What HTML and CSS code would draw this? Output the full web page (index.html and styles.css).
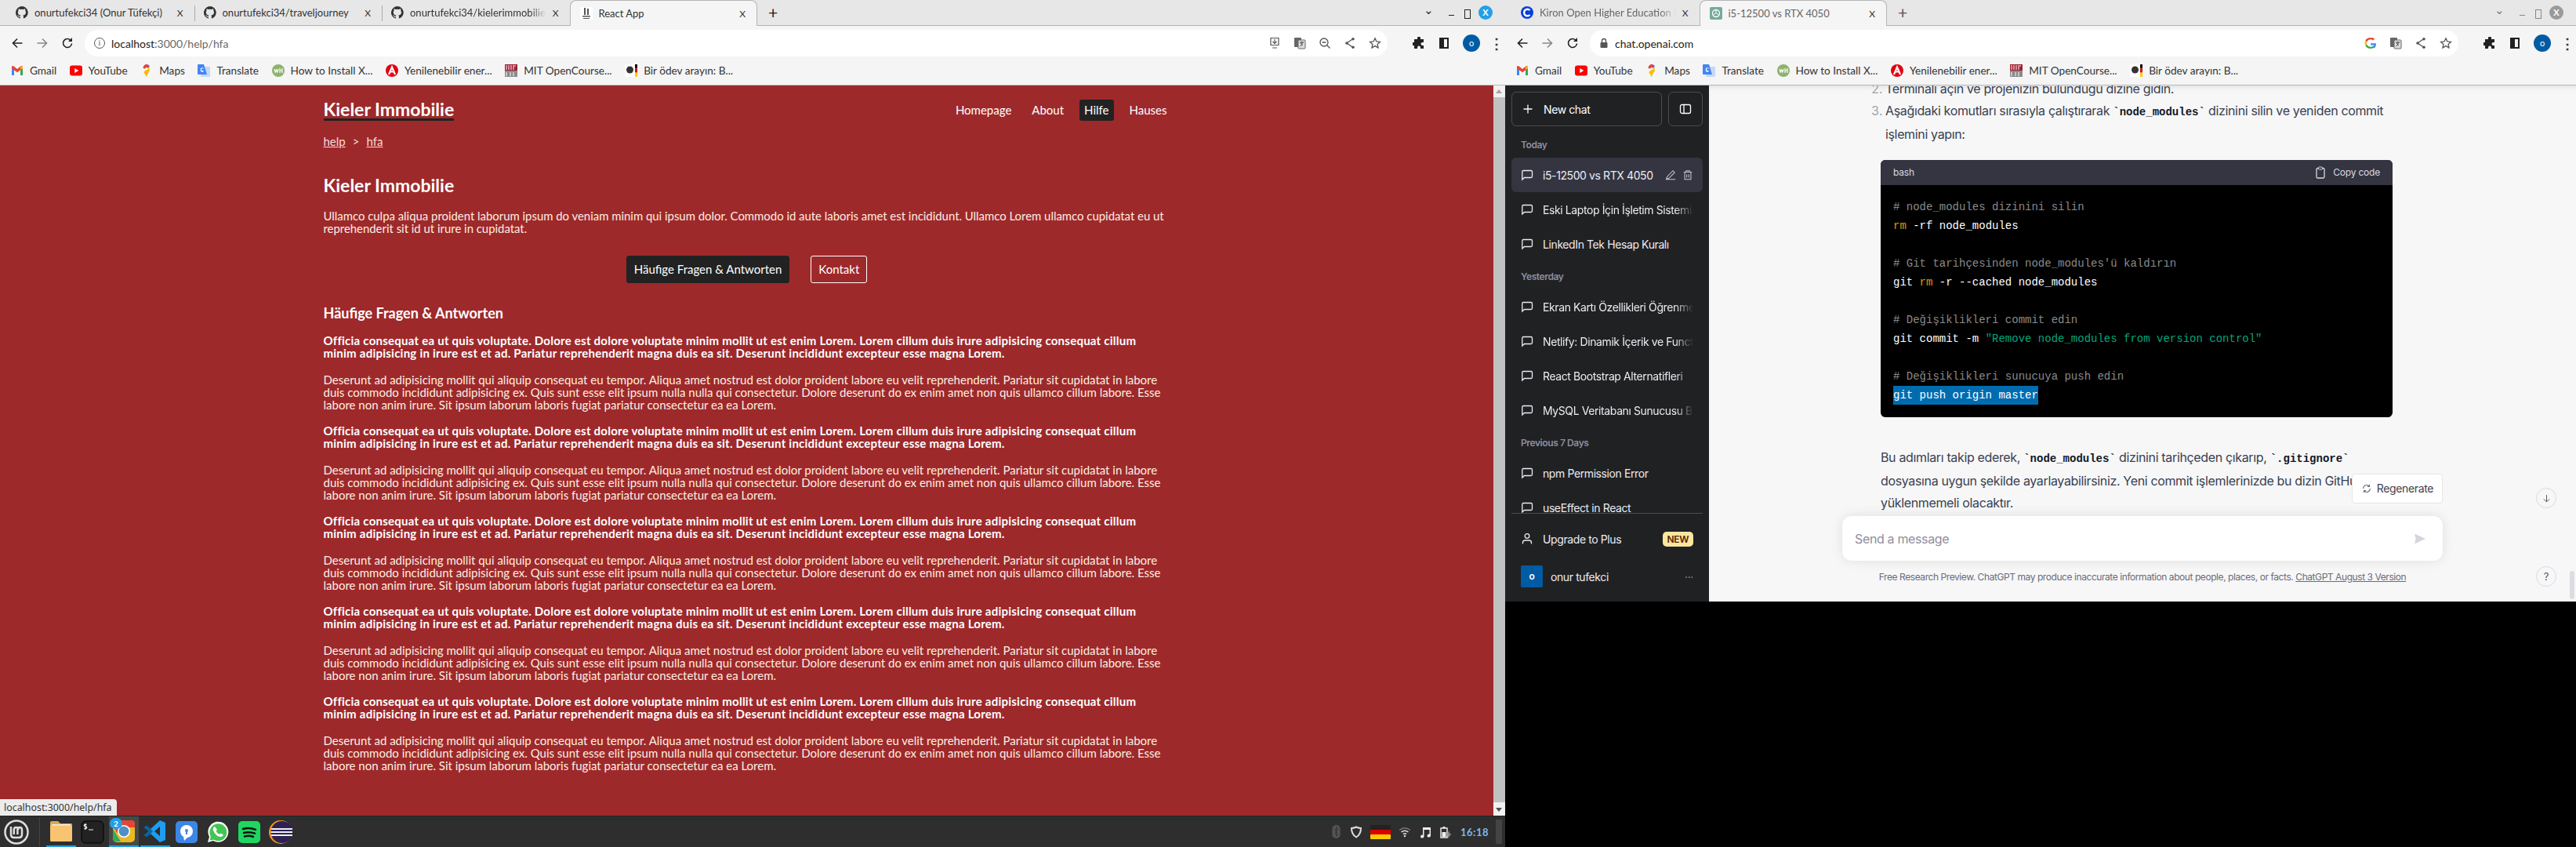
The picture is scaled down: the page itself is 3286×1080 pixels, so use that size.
FILE: index.html
```html
<!DOCTYPE html>
<html lang="de">
<head>
  <meta charset="UTF-8">
  <title>React App</title>
  <link rel="stylesheet" href="styles.css">
</head>
<body>

  <svg class="defs" width="0" height="0">
    <symbol id="i-github" viewBox="0 0 16 16"><path fill="#333" d="M8 0a8 8 0 0 0-2.5 15.6c.4.1.5-.2.5-.4v-1.4c-2.2.5-2.7-1-2.7-1-.4-.9-.9-1.200-.9-1.200-.7-.5.1-.5.1-.5.8.1 1.200.8 1.200.8.7 1.200 1.900.9 2.300.7.1-.5.3-.9.5-1.100-1.800-.2-3.700-.9-3.700-4 0-.9.3-1.600.8-2.100-.1-.2-.4-1 .1-2.100 0 0 .7-.2 2.200.8a7.600 7.600 0 0 1 4 0c1.500-1 2.200-.8 2.200-.8.4 1.100.2 1.900.1 2.100.5.6.8 1.300.8 2.100 0 3.100-1.900 3.700-3.700 3.900.3.3.6.8.6 1.500v2.200c0 .2.1.5.6.4A8 8 0 0 0 8 0z"/></symbol>
    <symbol id="i-back" viewBox="0 0 16 16"><path fill="none" stroke="currentColor" stroke-width="1.600" d="M14.500 8H2.500M8 2.500 2.500 8 8 13.500"/></symbol>
    <symbol id="i-reload" viewBox="0 0 16 16"><path fill="none" stroke="currentColor" stroke-width="1.600" d="M13.500 8.500a5.500 5.500 0 1 1-1.500-4.300"/><path fill="currentColor" d="M14 1v5H9z"/></symbol>
    <symbol id="i-star" viewBox="0 0 16 16"><path fill="none" stroke="#555" stroke-width="1.300" d="m8 1.800 1.900 4.100 4.500.5-3.300 3 .9 4.500L8 11.600l-4 2.300.9-4.500-3.300-3 4.500-.5z"/></symbol>
    <symbol id="i-share" viewBox="0 0 16 16"><path fill="none" stroke="#555" stroke-width="1.300" d="M12 2.500 4 8l8 5.500"/><circle cx="12" cy="2.800" r="1.800" fill="#555"/><circle cx="4" cy="8" r="1.800" fill="#555"/><circle cx="12" cy="13.200" r="1.800" fill="#555"/></symbol>
    <symbol id="i-translate" viewBox="0 0 16 16"><rect x="1" y="1" width="9" height="12" rx="1" fill="#666"/><rect x="6" y="4" width="9" height="11" rx="1" fill="#ddd" stroke="#666"/><path stroke="#444" fill="none" d="M8 7h5M10.500 6v1M9 12l3-5M9 8l3 3"/></symbol>
    <symbol id="i-puzzle" viewBox="0 0 16 16"><path fill="#222" d="M6 1.500a2 2 0 0 1 4 0V3h4v4h-1.500a2 2 0 0 0 0 4H14v4h-4v-1.500a2 2 0 0 0-4 0V15H2v-4H.5a2 2 0 0 1 0-4H2V3h4z"/></symbol>
    <symbol id="i-panel" viewBox="0 0 16 16"><path fill="#222" fill-rule="evenodd" d="M2 1h12v14H2zM8 3v10h4V3z"/></symbol>
    <symbol id="i-gmail" viewBox="0 0 16 16"><path fill="#4285f4" d="M1 4v10h3V7z"/><path fill="#34a853" d="M12 7v7h3V4z"/><path fill="#ea4335" d="M1 2.500v2.800l7 5 7-5V2.500l-2-.5-5 4-5-4z"/><path fill="#fbbc04" d="M12 3.500 15 2v3l-3 2z"/></symbol>
    <symbol id="i-youtube" viewBox="0 0 16 16"><rect y="1.500" width="16" height="13" rx="3" fill="#f00"/><path fill="#fff" d="m6.300 5 5 3-5 3z"/></symbol>
    <symbol id="i-maps" viewBox="0 0 16 16"><path fill="#34a853" d="M8 16c-1-3-2.500-4.500-3.500-6L8 8z"/><path fill="#fbbc04" d="M4.500 10 11 3.500 12 8c-1 2-3 4-4 8z"/><path fill="#4285f4" d="M8 0c2 0 3.500 1 4 3L8 6z"/><path fill="#ea4335" d="M8 0C5.500 0 3.500 2 3.500 5l4.500 1 3-3C10 1 9 0 8 0z"/><circle cx="8" cy="5.500" r="1.600" fill="#fff"/></symbol>
    <symbol id="i-gtranslate" viewBox="0 0 16 16"><rect x="4" y="3" width="12" height="13" rx="1" fill="#c6d8f7"/><path fill="#4285f4" d="M0 1q0-1 1-1h7l4 13H1q-1 0-1-1z"/><path fill="none" stroke="#fff" d="M7.500 5h-3v3.500h3C7.500 10 3 10 4.500 6"/></symbol>
    <symbol id="i-wh" viewBox="0 0 16 16"><circle cx="8" cy="8" r="8" fill="#8db26c"/><path fill="none" stroke="#fff" stroke-width="1.200" d="M3 6l1.200 4 1.300-3 1.300 3L8 6M10 5v6M13 5v6M10 8h3"/></symbol>
    <symbol id="i-arbeit" viewBox="0 0 16 16"><circle cx="8" cy="8" r="8" fill="#e3000f"/><path fill="none" stroke="#fff" stroke-width="2.200" d="M4 13 8 3.500 12 13M5.500 9.500h5"/></symbol>
    <symbol id="i-mit" viewBox="0 0 16 16"><rect width="16" height="8" fill="#a31f34"/><rect y="8" width="16" height="8" fill="#8a8b8c"/><path stroke="#fff" d="M2 1v6M5 1v6M8 1v6M11 1v6M13 1v2M2 10v5M7 10v5M11 10v5"/></symbol>
    <symbol id="i-eagle" viewBox="0 0 16 16"><rect width="16" height="16" fill="#fff"/><circle cx="6.500" cy="7" r="4.500" fill="#333"/><rect x="13" y="0" width="3" height="5.300" fill="#111"/><rect x="13" y="5.300" width="3" height="5.300" fill="#d00"/><rect x="13" y="10.600" width="3" height="5.400" fill="#fc0"/></symbol>
    <symbol id="i-chat" viewBox="0 0 16 16"><path fill="none" stroke="#ececf1" stroke-width="1.300" d="M3 2.500h10a1.500 1.500 0 0 1 1.500 1.500v6a1.500 1.500 0 0 1-1.500 1.500H4.500L1.800 14V4A1.500 1.500 0 0 1 3 2.500z"/></symbol>
  </svg>

  <div class="left-col">
    <div class="window">
      <div class="tabbar">
        <div class="tab"><svg class="fav"><use href="#i-github"/></svg><span class="tab-title">onurtufekci34 (Onur Tüfekçi)</span><span class="tab-x">X</span></div>
        <div class="tab"><svg class="fav"><use href="#i-github"/></svg><span class="tab-title">onurtufekci34/traveljourney</span><span class="tab-x">X</span></div>
        <div class="tab"><svg class="fav"><use href="#i-github"/></svg><span class="tab-title fade">onurtufekci34/kielerimmobilie</span><span class="tab-x">X</span></div>
        <div class="tab active"><svg class="fav" viewBox="0 0 16 16"><rect width="16" height="16" fill="#fff"/><path fill="#555" d="M5 1h2v9H5zM9 2h2v8H9zM3 11h10v1.500H3zM4 14h8v1H4z"/></svg><span class="tab-title">React App</span><span class="tab-x">X</span></div>
        <span class="new-tab">+</span>
        <div class="win-controls">
          <span class="chev">⌄</span><span class="win-min"></span><span class="win-max"></span><span class="win-close blue">X</span>
        </div>
      </div>
      <div class="toolbar">
        <svg class="nav-ic"><use href="#i-back"/></svg>
        <svg class="nav-ic fwd"><use href="#i-back"/></svg>
        <svg class="nav-ic"><use href="#i-reload"/></svg>
        <div class="omnibox">
          <span class="info">i</span>
          <span class="url"><b>localhost</b>:3000/help/hfa</span>
          <div class="omni-right">
            <svg class="omni-ic" viewBox="0 0 16 16"><path fill="none" stroke="#555" stroke-width="1.200" d="M3 1.500h10v9H3zM5 14h6M8 3v5M5.500 6 8 8.500 10.500 6"/></svg>
            <svg class="omni-ic"><use href="#i-translate"/></svg>
            <svg class="omni-ic" viewBox="0 0 16 16"><circle cx="7" cy="7" r="5" fill="none" stroke="#555" stroke-width="1.300"/><path stroke="#555" stroke-width="1.300" d="M4.500 7h5M10.500 10.500l4 4"/></svg>
            <svg class="omni-ic"><use href="#i-share"/></svg>
            <svg class="omni-ic"><use href="#i-star"/></svg>
          </div>
        </div>
        <div class="tool-right">
          <svg class="tool-ic"><use href="#i-puzzle"/></svg>
          <svg class="tool-ic"><use href="#i-panel"/></svg>
          <span class="avatar">o</span>
          <span class="dots">⋮</span>
        </div>
      </div>
      <div class="bookmarks">
        <span class="bm"><svg><use href="#i-gmail"/></svg>Gmail</span>
        <span class="bm"><svg><use href="#i-youtube"/></svg>YouTube</span>
        <span class="bm"><svg><use href="#i-maps"/></svg>Maps</span>
        <span class="bm"><svg><use href="#i-gtranslate"/></svg>Translate</span>
        <span class="bm"><svg><use href="#i-wh"/></svg>How to Install X...</span>
        <span class="bm"><svg><use href="#i-arbeit"/></svg>Yenilenebilir ener...</span>
        <span class="bm"><svg><use href="#i-mit"/></svg>MIT OpenCourse...</span>
        <span class="bm"><svg><use href="#i-eagle"/></svg>Bir ödev arayın: B...</span>
      </div>

      <div class="viewport">
        <main class="site">
          <div class="container">
            <header class="site-head">
              <a class="brand">Kieler Immobilie</a>
              <nav class="site-nav">
                <a>Homepage</a>
                <a>About</a>
                <a class="current">Hilfe</a>
                <a>Hauses</a>
              </nav>
            </header>
            <div class="crumbs"><a>help</a><span>&gt;</span><a>hfa</a></div>

            <h2>Kieler Immobilie</h2>
            <p class="intro">Ullamco culpa aliqua proident laborum ipsum do veniam minim qui ipsum dolor. Commodo id aute laboris amet est incididunt. Ullamco Lorem ullamco cupidatat eu ut<br>reprehenderit sit id ut irure in cupidatat.</p>
            <div class="actions">
              <a class="btn btn-dark">Häufige Fragen &amp; Antworten</a>
              <a class="btn btn-line">Kontakt</a>
            </div>

            <h3>Häufige Fragen &amp; Antworten</h3>
            <div class="faq">
              <p class="q">Officia consequat ea ut quis voluptate. Dolore est dolore voluptate minim mollit ut est enim Lorem. Lorem cillum duis irure adipisicing consequat cillum<br>minim adipisicing in irure est et ad. Pariatur reprehenderit magna duis ea sit. Deserunt incididunt excepteur esse magna Lorem.</p>
              <p class="a">Deserunt ad adipisicing mollit qui aliquip consequat eu tempor. Aliqua amet nostrud est dolor proident labore eu velit reprehenderit. Pariatur sit cupidatat in labore<br>duis commodo incididunt adipisicing ex. Quis sunt esse elit ipsum nulla nulla qui consectetur. Dolore deserunt do ex enim amet non quis ullamco cillum labore. Esse<br>labore non anim irure. Sit ipsum laborum laboris fugiat pariatur consectetur ea ea Lorem.</p>
              <p class="q">Officia consequat ea ut quis voluptate. Dolore est dolore voluptate minim mollit ut est enim Lorem. Lorem cillum duis irure adipisicing consequat cillum<br>minim adipisicing in irure est et ad. Pariatur reprehenderit magna duis ea sit. Deserunt incididunt excepteur esse magna Lorem.</p>
              <p class="a">Deserunt ad adipisicing mollit qui aliquip consequat eu tempor. Aliqua amet nostrud est dolor proident labore eu velit reprehenderit. Pariatur sit cupidatat in labore<br>duis commodo incididunt adipisicing ex. Quis sunt esse elit ipsum nulla nulla qui consectetur. Dolore deserunt do ex enim amet non quis ullamco cillum labore. Esse<br>labore non anim irure. Sit ipsum laborum laboris fugiat pariatur consectetur ea ea Lorem.</p>
              <p class="q">Officia consequat ea ut quis voluptate. Dolore est dolore voluptate minim mollit ut est enim Lorem. Lorem cillum duis irure adipisicing consequat cillum<br>minim adipisicing in irure est et ad. Pariatur reprehenderit magna duis ea sit. Deserunt incididunt excepteur esse magna Lorem.</p>
              <p class="a">Deserunt ad adipisicing mollit qui aliquip consequat eu tempor. Aliqua amet nostrud est dolor proident labore eu velit reprehenderit. Pariatur sit cupidatat in labore<br>duis commodo incididunt adipisicing ex. Quis sunt esse elit ipsum nulla nulla qui consectetur. Dolore deserunt do ex enim amet non quis ullamco cillum labore. Esse<br>labore non anim irure. Sit ipsum laborum laboris fugiat pariatur consectetur ea ea Lorem.</p>
              <p class="q">Officia consequat ea ut quis voluptate. Dolore est dolore voluptate minim mollit ut est enim Lorem. Lorem cillum duis irure adipisicing consequat cillum<br>minim adipisicing in irure est et ad. Pariatur reprehenderit magna duis ea sit. Deserunt incididunt excepteur esse magna Lorem.</p>
              <p class="a">Deserunt ad adipisicing mollit qui aliquip consequat eu tempor. Aliqua amet nostrud est dolor proident labore eu velit reprehenderit. Pariatur sit cupidatat in labore<br>duis commodo incididunt adipisicing ex. Quis sunt esse elit ipsum nulla nulla qui consectetur. Dolore deserunt do ex enim amet non quis ullamco cillum labore. Esse<br>labore non anim irure. Sit ipsum laborum laboris fugiat pariatur consectetur ea ea Lorem.</p>
              <p class="q">Officia consequat ea ut quis voluptate. Dolore est dolore voluptate minim mollit ut est enim Lorem. Lorem cillum duis irure adipisicing consequat cillum<br>minim adipisicing in irure est et ad. Pariatur reprehenderit magna duis ea sit. Deserunt incididunt excepteur esse magna Lorem.</p>
              <p class="a">Deserunt ad adipisicing mollit qui aliquip consequat eu tempor. Aliqua amet nostrud est dolor proident labore eu velit reprehenderit. Pariatur sit cupidatat in labore<br>duis commodo incididunt adipisicing ex. Quis sunt esse elit ipsum nulla nulla qui consectetur. Dolore deserunt do ex enim amet non quis ullamco cillum labore. Esse<br>labore non anim irure. Sit ipsum laborum laboris fugiat pariatur consectetur ea ea Lorem.</p>
            </div>
          </div>
          <div class="status-bubble">localhost:3000/help/hfa</div>
        </main>
        <div class="scrollbar">
          <span class="arrow-up"></span>
          <span class="thumb"></span>
          <span class="arrow-down"></span>
        </div>
      </div>
    </div>

    <footer class="taskbar">
      <svg class="mint" viewBox="0 0 32 32"><circle cx="16" cy="16" r="14.500" fill="none" stroke="#ddd" stroke-width="2.500"/><path fill="none" stroke="#ddd" stroke-width="2.500" d="M9 9v10q0 4 4 4h6q4 0 4-4v-6q0-3-2.800-3t-2.800 3v6M18.400 13q0-3-2.800-3t-2.800 3v6"/></svg>
      <span class="task-sep"></span>
      <div class="task-apps">
        <span class="app running"><svg viewBox="0 0 30 30"><path fill="#dca94f" d="M1 4q0-2 2-2h8l3 3h14q1 0 1 2v3H1z"/><rect x="1" y="7" width="28" height="21" rx="1.500" fill="#f8c471"/><rect x="3" y="6" width="24" height="1.500" fill="#eee"/></svg></span>
        <span class="app"><svg viewBox="0 0 30 30"><rect x="1" y="1" width="28" height="28" rx="5" fill="#222" stroke="#000"/><path fill="none" stroke="#eee" stroke-width="1.200" d="M7.500 5.500q-2-1-3 .3t1.500 2 1.500 2-3 .3M6 4v8M10 12h6"/></svg></span>
        <span class="app running focused"><svg viewBox="0 0 30 30"><rect x="1" y="1" width="28" height="28" rx="5" fill="#e8b923"/><path fill="#ea4335" d="M1 6q0-5 5-5h18q5 0 5 5v4H15L6 17z"/><path fill="#34a853" d="M1 12l10 16H6q-5 0-5-5z"/><circle cx="15" cy="15" r="8" fill="#fff"/><circle cx="15" cy="15" r="6.500" fill="#4f8fc6"/></svg><b class="badge">2</b></span>
        <span class="app running"><svg viewBox="0 0 30 30"><path fill="#1f9cf0" d="M21 1 28 4v22l-7 3-12-11-5 4-3-2 6-5-6-5 3-2 5 4zM21 9l-7 6 7 6z"/><path fill="#0065a9" d="M1 10l3-2 5 4 3 3-3 3-5 4-3-2 6-5z"/></svg></span>
        <span class="app"><svg viewBox="0 0 30 30"><rect x="1" y="1" width="28" height="28" rx="5" fill="#3d86e6"/><circle cx="15" cy="14" r="8" fill="#fff"/><circle cx="15" cy="13" r="2" fill="#3d86e6"/><rect x="14" y="13" width="2" height="5" fill="#3d86e6"/><path fill="#fff" d="M11 20l1 6 5-5z"/></svg></span>
        <span class="app"><svg viewBox="0 0 30 30"><path fill="#fff" d="M2 28l2-7a13 13 0 1 1 5 5z"/><path fill="#43c553" d="M4.500 25.500l1.300-4.700a11 11 0 1 1 4 4z"/><path fill="#fff" d="M11 8q-3 1-2 5 3 7 9 8 3 0 4-2.500l-3.500-2-1.500 1.500q-3-1-4.500-4.500l1.500-1.500z"/></svg></span>
        <span class="app"><svg viewBox="0 0 30 30"><rect x="1" y="1" width="28" height="28" rx="5" fill="#1ed760"/><path fill="none" stroke="#111" stroke-width="2.500" stroke-linecap="round" d="M7 11q8-2.500 16 .8M8 16q7-2 14 .6M9 20.500q6-1.600 11 .5"/></svg></span>
        <span class="app"><svg viewBox="0 0 30 30"><circle cx="15" cy="15" r="15" fill="#f7941e"/><circle cx="16.500" cy="15" r="14" fill="#2c2255"/><path stroke="#eee" stroke-width="1.800" d="M3 11h27M2.500 15h28M3 19h27"/></svg></span>
      </div>
      <div class="tray">
        <svg class="tray-bt" viewBox="0 0 12 20"><rect width="12" height="20" rx="6" fill="#555"/><path fill="none" stroke="#2e2e2e" d="M3 6l6 8-3 3V3l3 3-6 8"/></svg>
        <svg class="tray-ic" viewBox="0 0 16 16"><path fill="none" stroke="#ddd" stroke-width="2" d="M8 1.500q3 1.500 6 1.500 0 8-6 11.500Q2 11 2 3q3 0 6-1.500z"/></svg>
        <svg class="tray-flag" viewBox="0 0 26 18"><rect width="26" height="6" rx="1" fill="#222"/><rect y="6" width="26" height="6" fill="#d00"/><rect y="12" width="26" height="6" rx="1" fill="#fc0"/></svg>
        <svg class="tray-ic" viewBox="0 0 16 16"><path fill="none" stroke="#777" stroke-width="1.500" d="M1 5.500q7-5.500 14 0"/><path fill="none" stroke="#ddd" stroke-width="1.500" d="M3.500 8q4.500-3.500 9 0M5.800 10.500q2.200-1.700 4.400 0"/><circle cx="8" cy="13" r="1.300" fill="#ddd"/></svg>
        <svg class="tray-ic" viewBox="0 0 16 16"><path fill="#eee" d="M5 2h10v10.500a2.200 2 0 1 1-1.500-1.800V5H6.500v8.500A2.200 2 0 1 1 5 11.700z"/></svg>
        <svg class="tray-ic" viewBox="0 0 16 16"><path fill="none" stroke="#eee" stroke-width="1.400" d="M2 3h8v12H2z"/><rect x="4.500" y="1" width="3" height="2" fill="#eee"/><rect x="3.500" y="8" width="5" height="6" fill="#eee"/><path fill="#888" d="M13 6v4h2.500L11 16v-4H9z"/></svg>
        <span class="clock">16:18</span>
      </div>
      <span class="task-handle"></span>
    </footer>
  </div>

  <div class="window right-win">
    <div class="tabbar">
      <div class="tab"><svg class="fav" viewBox="0 0 16 16"><circle cx="8" cy="8" r="8" fill="#0a3fd8"/><path fill="none" stroke="#fff" stroke-width="2.400" d="M11.500 5a4.300 4.300 0 1 0 0 6"/></svg><span class="tab-title fade dim">Kiron Open Higher Education I</span><span class="tab-x">X</span></div>
      <div class="tab active"><svg class="fav" viewBox="0 0 16 16"><rect width="16" height="16" rx="2" fill="#74aa9c"/><circle cx="8" cy="8" r="4.500" fill="none" stroke="#fff" stroke-width="1.300"/><path stroke="#fff" d="M8 3.500v4M4 10.500l4-3M12 10.500l-4-3"/></svg><span class="tab-title dim">i5-12500 vs RTX 4050</span><span class="tab-x">X</span></div>
      <span class="new-tab">+</span>
      <div class="win-controls">
        <span class="chev muted">⌄</span><span class="win-min muted"></span><span class="win-max muted"></span><span class="win-close grey">X</span>
      </div>
    </div>
    <div class="toolbar">
      <svg class="nav-ic"><use href="#i-back"/></svg>
      <svg class="nav-ic fwd"><use href="#i-back"/></svg>
      <svg class="nav-ic"><use href="#i-reload"/></svg>
      <div class="omnibox">
        <svg class="lock" viewBox="0 0 12 14"><rect x="1.500" y="6" width="9" height="7" rx="1" fill="#555"/><path fill="none" stroke="#555" stroke-width="1.400" d="M3.500 6V4a2.500 2.500 0 0 1 5 0v2"/></svg>
        <span class="url dark">chat.openai.com</span>
        <div class="omni-right">
          <svg class="omni-ic" viewBox="0 0 16 16"><path fill="#4285f4" d="M15 8.200H8v2.400h4.200q-.3 1.500-1.500 2.300l2.200 1.700Q15 12.700 15 8.200z"/><path fill="#34a853" d="M3.300 9.700 1.300 11.300Q3.200 15 8 15q3 0 4.900-1.400l-2.200-1.700q-1.100.8-2.700.8-3.200 0-4.700-3z"/><path fill="#fbbc04" d="M3.300 6.300 1.300 4.700q-1.500 3.300 0 6.600l2-1.600q-.6-1.700 0-3.400z"/><path fill="#ea4335" d="M8 3.200q1.900 0 3.100 1.200l2-2Q11 1 8 1 3.200 1 1.300 4.700l2 1.600Q4.800 3.200 8 3.200z"/></svg>
          <svg class="omni-ic"><use href="#i-translate"/></svg>
          <svg class="omni-ic"><use href="#i-share"/></svg>
          <svg class="omni-ic"><use href="#i-star"/></svg>
        </div>
      </div>
      <div class="tool-right">
        <svg class="tool-ic"><use href="#i-puzzle"/></svg>
        <svg class="tool-ic"><use href="#i-panel"/></svg>
        <span class="avatar">o</span>
        <span class="dots">⋮</span>
      </div>
    </div>
    <div class="bookmarks">
      <span class="bm"><svg><use href="#i-gmail"/></svg>Gmail</span>
      <span class="bm"><svg><use href="#i-youtube"/></svg>YouTube</span>
      <span class="bm"><svg><use href="#i-maps"/></svg>Maps</span>
      <span class="bm"><svg><use href="#i-gtranslate"/></svg>Translate</span>
      <span class="bm"><svg><use href="#i-wh"/></svg>How to Install X...</span>
      <span class="bm"><svg><use href="#i-arbeit"/></svg>Yenilenebilir ener...</span>
      <span class="bm"><svg><use href="#i-mit"/></svg>MIT OpenCourse...</span>
      <span class="bm"><svg><use href="#i-eagle"/></svg>Bir ödev arayın: B...</span>
    </div>

    <div class="gpt">
      <aside class="sidebar">
        <div class="side-top">
          <div class="new-chat"><svg viewBox="0 0 16 16"><path stroke="#fff" stroke-width="1.300" d="M8 2.500v11M2.500 8h11"/></svg>New chat</div>
          <div class="side-toggle"><svg viewBox="0 0 16 16"><rect x="1.500" y="2.500" width="13" height="11" rx="2" fill="none" stroke="#fff" stroke-width="1.300"/><path stroke="#fff" stroke-width="1.300" d="M6 2.500v11"/></svg></div>
        </div>
        <div class="history">
          <div class="side-label first">Today</div>
          <div class="row selected"><svg><use href="#i-chat"/></svg><span class="row-title">i5-12500 vs RTX 4050</span>
            <svg class="row-act" viewBox="0 0 16 16"><path fill="none" stroke="#c5c5d2" stroke-width="1.200" d="M2 14l1-3.500L11.500 2 14 4.500 5.500 13zM1 14.500h14"/></svg>
            <svg class="row-act" viewBox="0 0 16 16"><path fill="none" stroke="#c5c5d2" stroke-width="1.200" d="M2 4h12M5.500 4V2h5v2M3.500 4v10.500h9V4M6.500 7v5M9.500 7v5"/></svg>
          </div>
          <div class="row"><svg><use href="#i-chat"/></svg><span class="row-title fade">Eski Laptop İçin İşletim Sistemi</span></div>
          <div class="row"><svg><use href="#i-chat"/></svg><span class="row-title">LinkedIn Tek Hesap Kuralı</span></div>
          <div class="side-label">Yesterday</div>
          <div class="row"><svg><use href="#i-chat"/></svg><span class="row-title fade">Ekran Kartı Özellikleri Öğrenme</span></div>
          <div class="row"><svg><use href="#i-chat"/></svg><span class="row-title fade">Netlify: Dinamik İçerik ve Functions</span></div>
          <div class="row"><svg><use href="#i-chat"/></svg><span class="row-title fade">React Bootstrap Alternatifleri</span></div>
          <div class="row"><svg><use href="#i-chat"/></svg><span class="row-title fade">MySQL Veritabanı Sunucusu Bağlantı</span></div>
          <div class="side-label">Previous 7 Days</div>
          <div class="row"><svg><use href="#i-chat"/></svg><span class="row-title">npm Permission Error</span></div>
          <div class="row"><svg><use href="#i-chat"/></svg><span class="row-title">useEffect in React</span></div>
        </div>
        <div class="side-foot">
          <div class="foot-row"><svg viewBox="0 0 16 16"><circle cx="8" cy="4.500" r="2.800" fill="none" stroke="#ececf1" stroke-width="1.300"/><path fill="none" stroke="#ececf1" stroke-width="1.300" d="M2.500 14.500v-1.500q0-3 3-3h5q3 0 3 3v1.500"/></svg>Upgrade to Plus<span class="new-badge">NEW</span></div>
          <div class="foot-row user"><span class="user-pic">o</span>onur tufekci<span class="more">···</span></div>
        </div>
      </aside>

      <section class="chat">
        <div class="answer">
          <ol start="2" class="steps">
            <li>Terminali açın ve projenizin bulunduğu dizine gidin.</li>
            <li>Aşağıdaki komutları sırasıyla çalıştırarak <code>`node_modules`</code> dizinini silin ve yeniden commit işlemini yapın:</li>
          </ol>
          <div class="code-box">
            <div class="code-head"><span>bash</span><span class="copy"><svg viewBox="0 0 16 16"><rect x="3" y="2.500" width="10" height="12.500" rx="1.500" fill="none" stroke="#d9d9e3" stroke-width="1.300"/><rect x="5.500" y="1" width="5" height="3" rx=".8" fill="#343541" stroke="#d9d9e3"/></svg>Copy code</span></div>
<pre class="code"><span class="cmt"># node_modules dizinini silin</span>
<span class="kw">rm</span> -rf node_modules

<span class="cmt"># Git tarihçesinden node_modules'ü kaldırın</span>
git <span class="kw">rm</span> -r --cached node_modules

<span class="cmt"># Değişiklikleri commit edin</span>
git commit -m <span class="str">"Remove node_modules from version control"</span>

<span class="cmt"># Değişiklikleri sunucuya push edin</span>
<span class="sel">git push origin master</span></pre>
          </div>
          <p class="outro">Bu adımları takip ederek, <code>`node_modules`</code> dizinini tarihçeden çıkarıp, <code>`.gitignore`</code><br>dosyasına uygun şekilde ayarlayabilirsiniz. Yeni commit işlemlerinizde bu dizin GitHub'a<br>yüklenmemeli olacaktır.</p>
        </div>

        <div class="regen"><svg viewBox="0 0 16 16"><path fill="none" stroke="#6e6e80" stroke-width="1.200" d="M13 8a5 5 0 0 1-9 3M3 8a5 5 0 0 1 9-3M12 2v3H9M4 14v-3h3"/></svg>Regenerate</div>
        <span class="round down"><svg viewBox="0 0 16 16"><path fill="none" stroke="#555" stroke-width="1.200" d="M8 2.500v11M3.500 9 8 13.500 12.500 9"/></svg></span>
        <div class="composer">
          <span>Send a message</span>
          <svg viewBox="0 0 16 16"><path fill="#d5d5dc" d="M1 1.500 15 8 1 14.500 2.500 8z"/></svg>
        </div>
        <p class="disclaimer">Free Research Preview. ChatGPT may produce inaccurate information about people, places, or facts. <u>ChatGPT August 3 Version</u></p>
        <span class="round help">?</span>
        <span class="chat-thumb"></span>
      </section>
    </div>
  </div>

</body>
</html>
```

FILE: styles.css
```css
* {
  box-sizing: border-box;
}
html, body {
  height: 100%;
}
body {
  margin: 0;
  display: flex;
  align-items: flex-start;
  background-color: #000;
  font-family: "Lato", sans-serif;
  overflow: hidden;
}
.defs {
  position: absolute;
}

/* windows */
.left-col {
  width: 1920px;
  height: 1080px;
  display: flex;
  flex-direction: column;
}
.window {
  width: 1920px;
  height: 1040px;
  display: flex;
  flex-direction: column;
}
.right-win {
  width: 1366px;
  height: 767px;
}

/* browser chrome */
.tabbar {
  height: 33px;
  padding-left: 8px;
  display: flex;
  align-items: stretch;
  background-color: #e7e7e7;
  border-bottom: 1px solid #b5b5b5;
  flex: none;
}
.tab {
  width: 239.500px;
  padding: 0 12px;
  display: flex;
  align-items: center;
  gap: 8px;
  position: relative;
  font-size: 13px;
  color: #333;
}
.tab + .tab:not(.active)::before {
  content: "";
  position: absolute;
  left: 0;
  top: 7px;
  height: 20px;
  width: 1px;
  background-color: #aaa;
}
.tab.active {
  background-color: #f5f5f5;
  border: 1px solid #b5b5b5;
  border-bottom: none;
  border-radius: 8px 8px 0 0;
  height: 33px;
}
.fav {
  width: 16px;
  height: 16px;
  flex: none;
}
.tab-title {
  flex: 1;
  white-space: nowrap;
  overflow: hidden;
}
.tab-title.dim {
  color: #666;
}
.fade {
  -webkit-mask-image: linear-gradient(to right, #000 88%, transparent);
  mask-image: linear-gradient(to right, #000 88%, transparent);
}
.tab-x {
  font-size: 12px;
  color: #333;
  margin-right: 2px;
}
.new-tab {
  width: 40px;
  text-align: center;
  font-size: 21px;
  line-height: 32px;
  color: #222;
}
.right-win .new-tab {
  color: #555;
}
.win-controls {
  margin-left: auto;
  display: flex;
  align-items: center;
  position: relative;
  width: 104px;
  height: 32px;
}
.chev {
  position: absolute;
  left: 0;
  top: 3px;
  font-size: 15px;
  color: #222;
}
.win-min {
  position: absolute;
  left: 32px;
  top: 19px;
  width: 7px;
  height: 1px;
  background-color: #222;
}
.win-max {
  position: absolute;
  left: 52px;
  top: 12px;
  width: 8px;
  height: 12px;
  border: 1px solid #222;
}
.muted {
  color: #777;
  border-color: #888;
}
.win-min.muted {
  background-color: #888;
}
.win-close {
  position: absolute;
  left: 70px;
  top: 7px;
  width: 18px;
  height: 18px;
  border-radius: 50%;
  color: #fff;
  font-size: 11px;
  font-weight: 700;
  line-height: 18px;
  text-align: center;
}
.blue {
  background-color: #23a0e5;
}
.grey {
  background-color: #9a9a9a;
}
.toolbar {
  height: 39px;
  padding: 5px 0 0 14px;
  display: flex;
  align-items: center;
  gap: 16px;
  background-color: #f5f5f5;
  flex: none;
}
.nav-ic {
  width: 16px;
  height: 16px;
  color: #222;
  flex: none;
}
.nav-ic.fwd {
  color: #888;
  transform: scaleX(-1);
}
.omnibox {
  flex: 1;
  height: 34px;
  margin-left: -2px;
  padding: 0 8px 0 12px;
  display: flex;
  align-items: center;
  background-color: #fff;
  border-radius: 17px;
  font-size: 14px;
}
.info {
  width: 14px;
  height: 14px;
  margin-right: 8px;
  border: 1px solid #555;
  border-radius: 50%;
  font-size: 10px;
  line-height: 12px;
  text-align: center;
  color: #555;
  font-family: "Liberation Serif", serif;
}
.lock {
  width: 12px;
  height: 14px;
  margin-right: 8px;
}
.url {
  color: #6a6a6a;
}
.url b {
  font-weight: 400;
  color: #222;
}
.url.dark {
  color: #222;
}
.omni-right {
  margin-left: auto;
  display: flex;
  gap: 16px;
}
.omni-ic {
  width: 16px;
  height: 16px;
}
.tool-right {
  width: 134px;
  padding-left: 16px;
  display: flex;
  align-items: center;
  gap: 11px;
}
.tool-ic {
  width: 16px;
  height: 16px;
  margin-right: 5px;
}
.avatar {
  width: 22px;
  height: 22px;
  border-radius: 50%;
  background-color: #005ba4;
  color: #fff;
  font-size: 11px;
  line-height: 21px;
  text-align: center;
}
.dots {
  margin-left: 1px;
  font-size: 18px;
  font-weight: 700;
  color: #333;
}
.bookmarks {
  height: 37px;
  padding: 0 0 1px 14px;
  display: flex;
  align-items: center;
  gap: 16.600px;
  background-color: #f5f5f5;
  border-bottom: 1px solid #bbb;
  font-size: 13.600px;
  color: #333;
  flex: none;
}
.bm {
  display: flex;
  align-items: center;
  gap: 8px;
  white-space: nowrap;
}
.bm svg {
  width: 16px;
  height: 16px;
}

/* site on the left */
.viewport {
  flex: 1;
  display: flex;
  min-height: 0;
}
.site {
  flex: 1;
  position: relative;
  background-color: #9e292b;
  color: #fff;
  overflow: hidden;
}
.container {
  width: 1080px;
  margin: 0 auto;
  padding-top: 18px;
  font-size: 15px;
  line-height: 16px;
}
.site-head {
  height: 27px;
  display: flex;
  justify-content: space-between;
  align-items: center;
}
.brand {
  height: 27px;
  font-size: 23px;
  line-height: 24px;
  font-weight: 700;
  border-bottom: 3px solid #222;
}
.site-nav {
  display: flex;
  gap: 14px;
  margin-right: -2px;
}
.site-nav a {
  height: 27px;
  padding: 0 6px;
  line-height: 27px;
  border-radius: 3px;
}
.site-nav .current {
  background-color: #222;
}
.crumbs {
  margin-top: 18px;
  display: flex;
  gap: 9px;
  color: #f6dcd9;
}
.crumbs a {
  text-decoration: underline;
}
h2 {
  margin: 36px 0 19px;
  font-size: 23px;
  line-height: 24px;
}
.intro {
  margin: 0;
  font-size: 14.900px;
  white-space: nowrap;
  color: #fdeee0;
}
.actions {
  margin-top: 27px;
  display: flex;
  justify-content: center;
  gap: 27px;
}
.btn {
  height: 35px;
  padding: 0 9px;
  line-height: 33px;
  border: 1px solid #222;
  border-radius: 3px;
}
.btn-dark {
  background-color: #222;
}
.btn-line {
  border-color: #fff;
}
h3 {
  margin: 28px 0 17px;
  font-size: 18px;
  line-height: 20px;
}
.faq {
  display: flex;
  flex-direction: column;
  gap: 17.500px;
}
.faq p {
  margin: 0;
}
.q {
  font-weight: 700;
  letter-spacing: .24px;
}
.a {
  color: #fdeee0;
}
.status-bubble {
  position: absolute;
  left: 0;
  bottom: 0;
  height: 21px;
  padding: 0 6px 0 5px;
  background-color: #ececec;
  border-top-right-radius: 4px;
  color: #333;
  font-size: 12.400px;
  line-height: 21px;
  font-family: "Noto Sans", sans-serif;
}
.scrollbar {
  width: 15px;
  display: flex;
  flex-direction: column;
  background-color: #f1f1f1;
}
.arrow-up, .arrow-down {
  height: 15px;
  position: relative;
}
.arrow-up::after, .arrow-down::after {
  content: "";
  position: absolute;
  left: 3px;
  top: 5px;
  border: 4px solid transparent;
  border-top: none;
  border-bottom: 5px solid #a3a3a3;
}
.arrow-down::after {
  border-top: 5px solid #505050;
  border-bottom: none;
}
.thumb {
  flex: 1;
  margin-bottom: 2px;
  background-color: #c1c1c1;
}

/* taskbar */
.taskbar {
  height: 40px;
  display: flex;
  align-items: center;
  position: relative;
  background-color: #2e2e2e;
  border-top: 1px solid #222;
}
.mint {
  width: 32px;
  height: 32px;
  margin-left: 5px;
}
.task-sep {
  width: 1px;
  height: 38px;
  margin-left: 13px;
  background-color: #444;
}
.task-apps {
  margin-left: 8px;
  display: flex;
  gap: 2px;
}
.app {
  width: 38px;
  height: 39px;
  display: flex;
  align-items: center;
  justify-content: center;
  position: relative;
}
.app svg {
  width: 30px;
  height: 30px;
}
.app.running {
  border-bottom: 2px solid #1f9ede;
}
.app.focused {
  background-color: #484848;
}
.badge {
  position: absolute;
  left: 1px;
  top: 2px;
  width: 16px;
  height: 14px;
  border-radius: 7px;
  background-color: #23a0e5;
  color: #fff;
  font-size: 10px;
  line-height: 14px;
  text-align: center;
}
.tray {
  margin-left: auto;
  margin-right: 21px;
  display: flex;
  align-items: center;
  gap: 10px;
}
.tray-bt {
  width: 11px;
  height: 17px;
  margin-right: 2px;
}
.tray-ic {
  width: 16px;
  height: 16px;
}
.tray-flag {
  width: 26px;
  height: 18px;
}
.clock {
  margin-left: 1px;
  color: #7db8e8;
  font-size: 13px;
  font-weight: 700;
  letter-spacing: .5px;
}
.task-handle {
  position: absolute;
  right: 4px;
  top: 4px;
  width: 8px;
  height: 31px;
  background-color: #444;
}

/* chatgpt */
.gpt {
  flex: 1;
  display: flex;
  min-height: 0;
}
.sidebar {
  width: 260px;
  padding: 8px 8px 8px;
  display: flex;
  flex-direction: column;
  background-color: #202123;
  color: #ececf1;
  font-family: "Inter", sans-serif;
  font-size: 14px;
  letter-spacing: -.4px;
}
.side-top {
  display: flex;
  gap: 8px;
  flex: none;
}
.new-chat, .side-toggle {
  height: 44px;
  display: flex;
  align-items: center;
  border: 1px solid #4d4d4f;
  border-radius: 6px;
  color: #fff;
}
.new-chat {
  flex: 1;
  padding-left: 12px;
  gap: 12px;
}
.new-chat svg, .side-toggle svg {
  width: 16px;
  height: 16px;
}
.side-toggle {
  width: 44px;
  justify-content: center;
}
.history {
  flex: 1;
  min-height: 0;
  overflow: hidden;
}
.side-label {
  height: 36px;
  padding-left: 12px;
  line-height: 40px;
  font-size: 12px;
  font-weight: 600;
  color: #8e8ea0;
}
.side-label.first {
  margin-top: 4px;
}
.row {
  height: 44px;
  padding: 0 12px;
  display: flex;
  align-items: center;
  gap: 12px;
  border-radius: 6px;
}
.row svg {
  width: 16px;
  height: 16px;
  flex: none;
}
.row.selected {
  background-color: #343541;
}
.row svg.row-act {
  width: 14px;
  height: 14px;
  margin-left: -4px;
}
.row-title {
  flex: 1;
  min-width: 0;
  white-space: nowrap;
  overflow: hidden;
}
.side-foot {
  padding-top: 8px;
  border-top: 1px solid #4d4d4f;
  flex: none;
}
.foot-row {
  height: 48px;
  padding: 0 12px;
  display: flex;
  align-items: center;
  gap: 12px;
}
.foot-row svg {
  width: 16px;
  height: 16px;
}
.new-badge {
  margin-left: auto;
  padding: 2px 6px;
  border-radius: 5px;
  background-color: #fae69e;
  color: #562105;
  font-size: 12px;
  font-weight: 600;
}
.user {
  gap: 10px;
}
.user-pic {
  width: 28px;
  height: 28px;
  border-radius: 2px;
  background-color: #005ba4;
  color: #fff;
  font-size: 12px;
  font-weight: 600;
  line-height: 27px;
  text-align: center;
}
.more {
  margin-left: auto;
  color: #8e8ea0;
}

.chat {
  flex: 1;
  position: relative;
  overflow: hidden;
  background-color: #f7f7f8;
  box-shadow: inset 0 8px 8px -8px rgba(0, 0, 0, .15);
  color: #374151;
  font-family: "Inter", sans-serif;
  font-size: 16px;
  line-height: 28px;
  letter-spacing: -.35px;
}
.answer {
  width: 660px;
  margin-top: -10px;
  margin-left: 219px;
}
.steps {
  margin: 0;
  padding-left: 6px;
}
.steps li::marker {
  color: #9ca3af;
}
code {
  font-family: "Liberation Mono", monospace;
  font-size: 14px;
  font-weight: 700;
  letter-spacing: 0;
  color: #111827;
}
.code-box {
  width: 653px;
  margin-top: 19px;
  border-radius: 6px;
  overflow: hidden;
  background-color: #000;
}
.code-head {
  height: 32px;
  padding: 0 16px;
  display: flex;
  justify-content: space-between;
  align-items: center;
  background-color: #343541;
  color: #d9d9e3;
  font-size: 12px;
  letter-spacing: -.2px;
}
.copy {
  display: flex;
  align-items: center;
  gap: 8px;
}
.copy svg {
  width: 16px;
  height: 16px;
}
.code {
  margin: 0;
  padding: 16px;
  height: 296px;
  color: #fff;
  font-family: "Liberation Mono", monospace;
  font-size: 14px;
  line-height: 24px;
  letter-spacing: 0;
}
.cmt {
  color: #8a8a8a;
}
.kw {
  color: #e9950c;
}
.str {
  color: #00a67d;
}
.sel {
  display: inline-block;
  background-color: #006cb0;
}
.outro {
  margin: 37px 0 0;
  white-space: nowrap;
}
.regen {
  position: absolute;
  left: 820px;
  top: 495px;
  width: 116px;
  height: 38px;
  display: flex;
  align-items: center;
  justify-content: center;
  gap: 6px;
  background-color: #fff;
  border: 1px solid #e5e5e5;
  border-radius: 4px;
  font-size: 14px;
  color: #40414f;
}
.regen svg {
  width: 14px;
  height: 14px;
}
.composer {
  position: absolute;
  left: 170px;
  top: 549px;
  width: 766px;
  height: 57px;
  padding: 0 16px;
  display: flex;
  justify-content: space-between;
  align-items: center;
  background-color: #fff;
  border-radius: 12px;
  box-shadow: 0 0 15px rgba(0, 0, 0, .1);
  color: #8e8ea0;
}
.composer svg {
  width: 16px;
  height: 16px;
  margin-right: 5px;
}
.disclaimer {
  position: absolute;
  left: 170px;
  top: 616px;
  width: 766px;
  margin: 0;
  font-size: 12px;
  line-height: 22px;
  letter-spacing: -.43px;
  text-align: center;
  color: #6b6c7b;
}
.round {
  position: absolute;
  left: 1055px;
  width: 26px;
  height: 26px;
  display: flex;
  align-items: center;
  justify-content: center;
  border: 1px solid #d9d9e3;
  border-radius: 50%;
  background-color: #f7f7f8;
  color: #555;
  font-size: 13px;
}
.round svg {
  width: 13px;
  height: 13px;
}
.down {
  top: 513px;
}
.help {
  top: 613px;
}
.chat-thumb {
  position: absolute;
  right: 2px;
  top: 619px;
  width: 6px;
  height: 36px;
  border-radius: 3px;
  background-color: #dcdce2;
}
```
